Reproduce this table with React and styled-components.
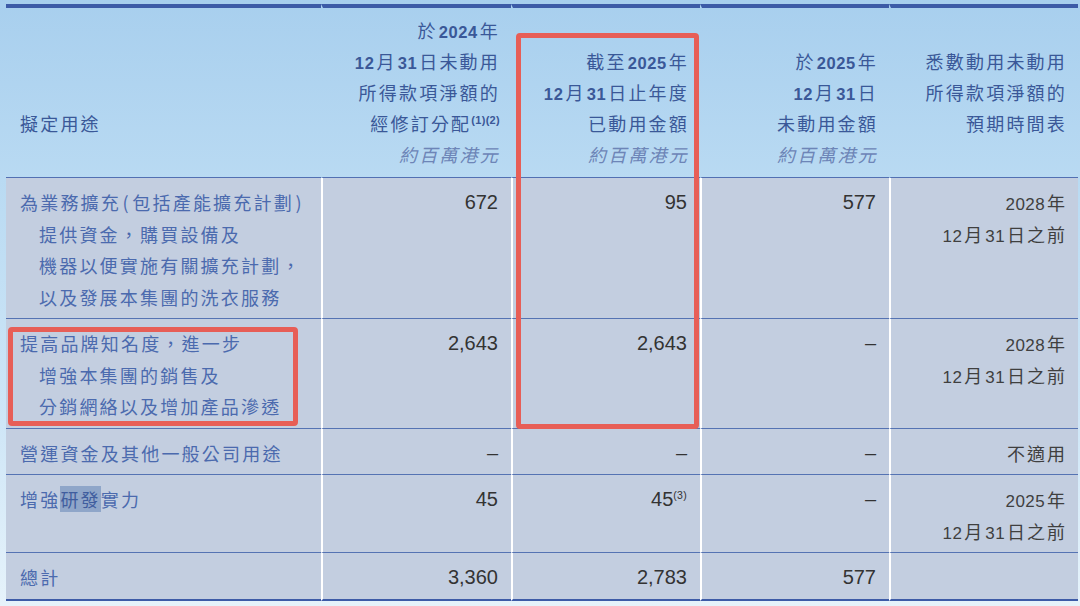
import React from 'react'
import styled, { createGlobalStyle } from 'styled-components'

const GlobalStyle = createGlobalStyle`
  body {
    margin: 0;
    background: linear-gradient(180deg, #a8cfee 0%, #bcdcf3 35%, #cfe6f7 70%, #e6f3fb 100%);
    font-family: "Noto Sans CJK TC", "Liberation Sans", sans-serif;
    min-height: 606px;
    overflow: hidden;
  }
`

const Wrapper = styled.div`
  position: relative;
  margin: 4px 0 0 6px;
  width: 1072px;
`

const Table = styled.div`
  display: grid;
  grid-template-columns: 315px 190px 189px 189px 189px;
`

const HeadCell = styled.div`
  display: flex;
  flex-direction: column;
  justify-content: flex-end;
  align-items: ${p => (p.$left ? 'flex-start' : 'flex-end')};
  border-top: 4px solid #3d5ba7;
  border-bottom: 1px solid #5270b2;
  border-left: ${p => (p.$first ? '0' : '2px solid transparent')};
  padding: 7px 11px 7px ${p => (p.$left ? '14px' : '0')};
  color: #3a5898;
  font-size: 18px;
  letter-spacing: 2.2px;
  line-height: 31px;
  white-space: nowrap;
`

const HeadLine = styled.div`
  height: 31px;
`

const Bold = styled.span`
  font-family: "Liberation Sans", sans-serif;
  font-weight: 700;
  font-size: 16.5px;
  letter-spacing: 0.6px;
  line-height: 1;
  margin: 0 2px 0 1px;
`

const Unit = styled.div`
  color: #6d85b7;
  font-style: italic;
  height: 31px;
`

const Sup = styled.sup`
  font-family: "Liberation Sans", sans-serif;
  font-size: ${p => (p.$bold ? '11px' : '10.5px')};
  letter-spacing: 0.3px;
  vertical-align: 7px;
  line-height: 0;
  font-weight: ${p => (p.$bold ? 700 : 400)};
`

const BodyCell = styled.div`
  background: #c3cee0;
  border-top: ${p => (p.$firstRow ? '0' : '1px solid #5573b3')};
  border-left: ${p => (p.$first ? '0' : '2px solid #ffffff')};
  border-bottom: ${p => (p.$lastRow ? '2.5px solid #3d5ba7' : '0')};
  padding: 9px 13px 5px ${p => (p.$first ? '14px' : '0')};
  text-align: ${p => (p.$first ? 'left' : 'right')};
  font-size: 18px;
  line-height: 31.5px;
  white-space: nowrap;
`

const Purpose = styled.div`
  height: 31.5px;
  color: #4b6aae;
  letter-spacing: 2.2px;
  padding-left: ${p => (p.$indent ? '19px' : '0')};
`

const Paren = styled.span`
  margin: 0 1.5px;
`

const Mark = styled.span`
  background: #8fa6c9;
  color: #3f5d9e;
`

const Amount = styled.div`
  height: 31.5px;
  font-family: "Liberation Sans", sans-serif;
  font-size: 20px;
  color: #333333;
`

const Timeline = styled.div`
  height: 31.5px;
  color: #3f3f3f;
  letter-spacing: 2px;
  margin-right: -2px;
`

const Digits = styled.span`
  font-family: "Liberation Sans", sans-serif;
  font-size: 17px;
  letter-spacing: 0.4px;
  line-height: 1;
  margin: 0 2px 0 1px;
`

const RedBox = styled.div`
  position: absolute;
  left: ${p => p.$x}px;
  top: ${p => p.$y}px;
  width: ${p => p.$w}px;
  height: ${p => p.$h}px;
  box-sizing: border-box;
  border: 5px solid #e75e57;
  border-radius: 4px;
  pointer-events: none;
`

const withBold = text =>
  text.split(/(\d+)/).map((part, i) =>
    /^\d+$/.test(part) ? <Bold key={i}>{part}</Bold> : part
  )

const withDigits = text =>
  text.split(/(\d+)/).map((part, i) =>
    /^\d+$/.test(part) ? <Digits key={i}>{part}</Digits> : part
  )

const headers = [
  { left: true, lines: ['擬定用途'], unit: '' },
  { lines: ['於2024年', '12月31日未動用', '所得款項淨額的', '經修訂分配'], sup: '(1)(2)', unit: '約百萬港元' },
  { lines: ['截至2025年', '12月31日止年度', '已動用金額'], unit: '約百萬港元' },
  { lines: ['於2025年', '12月31日', '未動用金額'], unit: '約百萬港元' },
  { lines: ['悉數動用未動用', '所得款項淨額的', '預期時間表'], unit: '' },
]

const rows = [
  {
    purpose: ['為業務擴充(包括產能擴充計劃)', '提供資金，購買設備及', '機器以便實施有關擴充計劃，', '以及發展本集團的洗衣服務'],
    a: '672', b: '95', c: '577', time: ['2028年', '12月31日之前'],
  },
  {
    purpose: ['提高品牌知名度，進一步', '增強本集團的銷售及', '分銷網絡以及增加產品滲透'],
    a: '2,643', b: '2,643', c: '–', time: ['2028年', '12月31日之前'],
  },
  { purpose: ['營運資金及其他一般公司用途'], a: '–', b: '–', c: '–', time: ['不適用'] },
  { purpose: ['增強|研發|實力'], a: '45', b: '45', bSup: '(3)', c: '–', time: ['2025年', '12月31日之前'] },
  { purpose: ['總計'], a: '3,360', b: '2,783', c: '577', time: [] },
]

// "|" marks the highlighted words, round brackets get a little air around them
const renderPurpose = text => {
  const parens = t =>
    t.split(/([()])/).map((part, i) =>
      part === '(' || part === ')' ? <Paren key={i}>{part}</Paren> : part
    )
  if (!text.includes('|')) return parens(text)
  const [before, marked, after] = text.split('|')
  return (
    <>
      {before}
      <Mark>{marked}</Mark>
      {after}
    </>
  )
}

export default function App() {
  return (
    <>
      <GlobalStyle />
      <Wrapper>
        <Table>
          {headers.map((h, i) => (
            <HeadCell key={i} $left={h.left} $first={i === 0}>
              {h.lines.map((line, j) => (
                <HeadLine key={j}>
                  {withBold(line)}
                  {h.sup && j === h.lines.length - 1 && <Sup $bold>{h.sup}</Sup>}
                </HeadLine>
              ))}
              <Unit>{h.unit}</Unit>
            </HeadCell>
          ))}

          {rows.map((r, i) => {
            const flags = { $firstRow: i === 0, $lastRow: i === rows.length - 1 }
            return (
              <React.Fragment key={i}>
                <BodyCell {...flags} $first>
                  {r.purpose.map((line, j) => (
                    <Purpose key={j} $indent={j > 0}>
                      {renderPurpose(line)}
                    </Purpose>
                  ))}
                </BodyCell>
                <BodyCell {...flags}>
                  <Amount>{r.a}</Amount>
                </BodyCell>
                <BodyCell {...flags}>
                  <Amount>
                    {r.b}
                    {r.bSup && <Sup>{r.bSup}</Sup>}
                  </Amount>
                </BodyCell>
                <BodyCell {...flags}>
                  <Amount>{r.c}</Amount>
                </BodyCell>
                <BodyCell {...flags}>
                  {r.time.map((line, j) => (
                    <Timeline key={j}>{withDigits(line)}</Timeline>
                  ))}
                </BodyCell>
              </React.Fragment>
            )
          })}
        </Table>

        <RedBox $x={510} $y={29} $w={183} $h={396} />
        <RedBox $x={2} $y={323} $w={290} $h={99} />
      </Wrapper>
    </>
  )
}
